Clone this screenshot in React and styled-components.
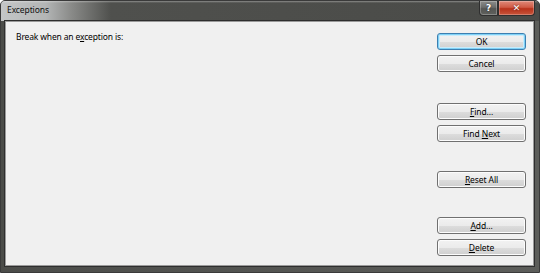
import React from "react"
import styled, { createGlobalStyle } from "styled-components"

const Global = createGlobalStyle`
  html, body { margin: 0; padding: 0; background: #fff; }
  body { font-family: "Noto Sans", "Open Sans", sans-serif; }
`

const Window = styled.div`
  width: 540px;
  height: 273px;
  box-sizing: border-box;
  display: flex;
  flex-direction: column;
  background: #4b4c49;
  border: 1px solid #3a3a3a;
  border-radius: 5px 5px 0 0;
  overflow: hidden;
`

const TitleBar = styled.div`
  height: 20px;
  flex: none;
  display: flex;
  align-items: flex-start;
  justify-content: space-between;
  background:
    linear-gradient(180deg, rgba(255,255,255,0.35) 0, rgba(255,255,255,0) 2px),
    linear-gradient(90deg, #c4c6c7 0, #b3b5b5 45px, #8a8b89 70px, #4f504d 110px, #4a4b48 100%);
`

const Title = styled.span`
  font-size: 8.5px;
  color: #111;
  padding: 3px 0 0 6px;
  letter-spacing: -0.1px;
`

const Caption = styled.div`
  display: flex;
  margin-right: 4px;
`

const CapButton = styled.div`
  height: 15px;
  width: ${p => p.$w}px;
  box-sizing: border-box;
  border: 1px solid #2f2f2f;
  border-top: none;
  display: flex;
  align-items: center;
  justify-content: center;
  color: #fff;
  font: bold 9px "DejaVu Sans", sans-serif;
  background: ${p => p.$close
    ? "linear-gradient(180deg, #e08a7a 0, #cf5a45 45%, #b8321b 55%, #c8553b 100%)"
    : "linear-gradient(180deg, #8d8e8c 0, #6b6c6a 45%, #555653 55%, #60615e 100%)"};
  border-radius: ${p => p.$close ? "0 0 4px 0" : "0 0 0 4px"};
  box-shadow: inset 0 0 0 1px rgba(255,255,255,0.25);
  text-shadow: 0 0 2px rgba(0,0,0,0.6);
`

const Frame = styled.div`
  flex: 1;
  display: flex;
  padding: 0 5px 6px 4px;
  background: linear-gradient(90deg, #4b4c49, #5c5d5a);
`

const Client = styled.div`
  flex: 1;
  display: flex;
  justify-content: space-between;
  background: #f0f0f0;
  border: 1px solid #9a9a9a;
  box-shadow: 0 0 0 1px #2e2e2e;
  padding: 8px 7px 0 10px;
`

const Label = styled.div`
  font-size: 8.5px;
  letter-spacing: -0.15px;
  color: #000;
  padding-top: 1px;
  & u { text-decoration-thickness: 1px; text-underline-offset: 1px; }
`

const ButtonColumn = styled.div`
  display: flex;
  flex-direction: column;
  width: 89px;
`

const Group = styled.div`
  display: flex;
  flex-direction: column;
  gap: 5px;
  margin-top: ${p => p.$top || 0}px;
`

const Button = styled.div`
  height: 17px;
  box-sizing: border-box;
  display: flex;
  align-items: center;
  justify-content: center;
  font-size: 8.5px;
  letter-spacing: -0.1px;
  color: #000;
  border: 1px solid ${p => p.$default ? "#3c7fb1" : "#707070"};
  border-radius: 3px;
  background: linear-gradient(180deg, #f2f2f2 0, #ebebeb 50%, #dddddd 51%, #cfcfcf 100%);
  box-shadow: ${p => p.$default
    ? "inset 0 0 0 1px #7fd1f6, inset 0 0 0 2px #c9ebfb"
    : "inset 0 0 0 1px #fcfcfc"};
  & u { text-decoration-thickness: 1px; text-underline-offset: 1px; }
`

export default function App() {
  return (
    <>
      <Global />
      <Window>
        <TitleBar>
          <Title>Exceptions</Title>
          <Caption>
            <CapButton $w={19}>?</CapButton>
            <CapButton $w={37} $close>✕</CapButton>
          </Caption>
        </TitleBar>
        <Frame>
          <Client>
            <Label>Break when an e<u>x</u>ception is:</Label>
            <ButtonColumn>
              <Group $top={3}>
                <Button $default><span>OK</span></Button>
                <Button><span>Cancel</span></Button>
              </Group>
              <Group $top={31}>
                <Button><span><u>F</u>ind...</span></Button>
                <Button><span>Find <u>N</u>ext</span></Button>
              </Group>
              <Group $top={29}>
                <Button><span><u>R</u>eset All</span></Button>
              </Group>
              <Group $top={29}>
                <Button><span><u>A</u>dd...</span></Button>
                <Button><span><u>D</u>elete</span></Button>
              </Group>
            </ButtonColumn>
          </Client>
        </Frame>
      </Window>
    </>
  )
}
